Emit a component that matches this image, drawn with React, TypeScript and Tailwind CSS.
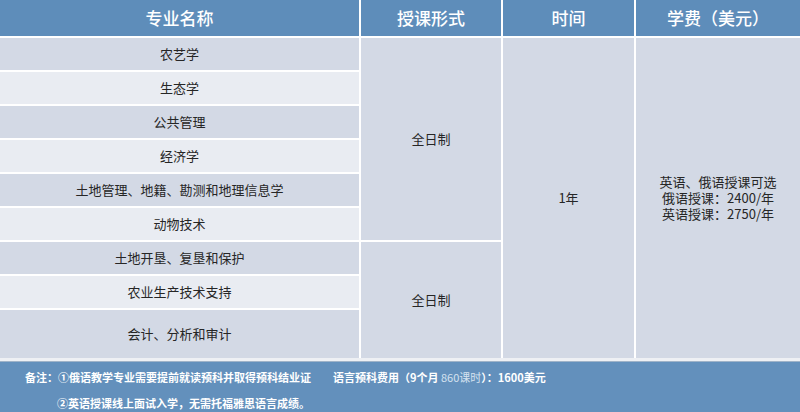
import React from "react";

const font = { fontFamily: '"Noto Sans CJK SC", "Noto Sans", sans-serif' };

const majors = [
  "农艺学",
  "生态学",
  "公共管理",
  "经济学",
  "土地管理、地籍、勘测和地理信息学",
  "动物技术",
  "土地开垦、复垦和保护",
  "农业生产技术支持",
  "会计、分析和审计",
];

const rowStart = [
  "row-start-2",
  "row-start-3",
  "row-start-4",
  "row-start-5",
  "row-start-6",
  "row-start-7",
  "row-start-8",
  "row-start-9",
  "row-start-10",
];

export default function App() {
  return (
    <div className="w-[800px] h-[412px] bg-white overflow-hidden" style={font}>
      <div className="grid grid-cols-[359px_140px_131px_164px] grid-rows-[36px_repeat(8,32px)_48px] gap-[2px] bg-white">
        <div className="col-start-1 row-start-1 bg-[#5e8dba] text-white text-[17px] font-medium flex items-center justify-center">专业名称</div>
        <div className="col-start-2 row-start-1 bg-[#5e8dba] text-white text-[17px] font-medium flex items-center justify-center">授课形式</div>
        <div className="col-start-3 row-start-1 bg-[#5e8dba] text-white text-[17px] font-medium flex items-center justify-center">时间</div>
        <div className="col-start-4 row-start-1 bg-[#5e8dba] text-white text-[17px] font-medium flex items-center justify-center">学费（美元）</div>

        {majors.map((m, i) => (
          <div
            key={m}
            className={`col-start-1 ${rowStart[i]} ${i % 2 === 0 ? "bg-[#d3d9e5]" : "bg-[#e9ecf2]"} text-[13px] text-[#262626] flex items-center justify-center`}
          >
            {m}
          </div>
        ))}

        <div className="col-start-2 row-start-2 row-span-6 bg-[#d3d9e5] text-[13px] text-[#262626] flex items-center justify-center">全日制</div>
        <div className="col-start-2 row-start-8 row-span-3 bg-[#d3d9e5] text-[13px] text-[#262626] flex items-center justify-center">全日制</div>
        <div className="col-start-3 row-start-2 row-span-9 bg-[#d3d9e5] text-[13px] text-[#262626] flex items-center justify-center">1年</div>
        <div className="col-start-4 row-start-2 row-span-9 bg-[#d3d9e5] text-[13px] leading-[16px] text-[#262626] flex flex-col items-center justify-center">
          <span>英语、俄语授课可选</span>
          <span>俄语授课：2400/年</span>
          <span>英语授课：2750/年</span>
        </div>
      </div>
      <div className="h-[3px] bg-[#eef0f4]" />
      <div className="h-[1px] bg-[#9fb3c8]" />
      <div className="h-[50px] bg-[#6390bc] text-white text-[11px] font-bold pt-[2px]">
        <div className="flex leading-[26px]">
          <span className="w-[333px] pl-[25px] shrink-0">备注：①俄语教学专业需要提前就读预科并取得预科结业证</span>
          <span>
            语言预科费用（9个月 <span className="font-normal text-[#d5e2f0]">860课时</span>）：1600美元
          </span>
        </div>
        <div className="leading-[26px] pl-[57px]">②英语授课线上面试入学，无需托福雅思语言成绩。</div>
      </div>
    </div>
  );
}
